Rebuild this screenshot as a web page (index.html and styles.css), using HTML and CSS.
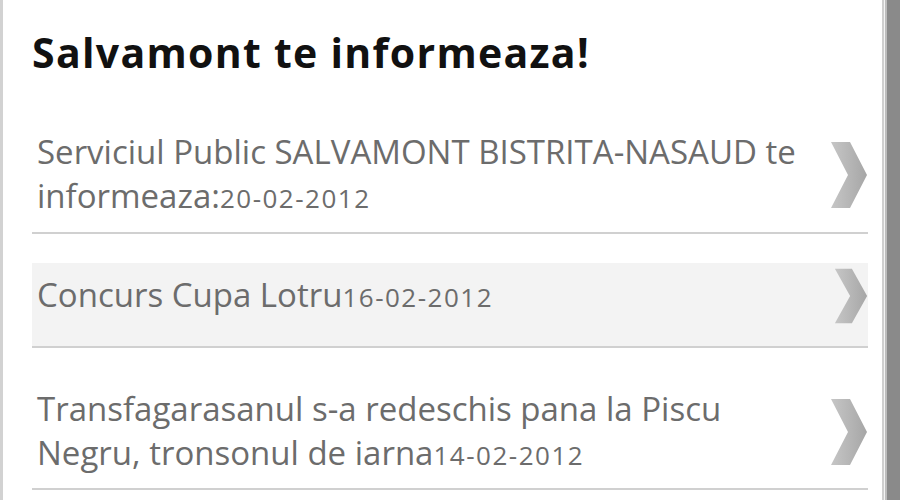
FILE: index.html
```html
<!DOCTYPE html>
<html>
<head>
<meta charset="utf-8">
<link rel="stylesheet" href="styles.css">
</head>
<body>
<div class="screen">
  <div class="edge-left"></div>
  <main class="content">
    <h1 class="title">Salvamont te informeaza!</h1>
    <ul class="list">
      <li class="item">
        <p class="text">Serviciul Public SALVAMONT BISTRITA-NASAUD te informeaza:<span class="date">20-02-2012</span></p>
        <svg class="chev" viewBox="0 0 38 68" preserveAspectRatio="none" aria-hidden="true"><defs><linearGradient id="g1" x1="0" y1="0" x2="1" y2="0"><stop offset="0" stop-color="#c6c6c6"/><stop offset="1" stop-color="#a6a6a6"/></linearGradient></defs><polygon points="1,1 20,1 37,34 20,67 1,67 18,34" fill="url(#g1)"/></svg>
      </li>
      <li class="item item-active">
        <p class="text">Concurs Cupa Lotru<span class="date">16-02-2012</span></p>
        <svg class="chev chev-sm" viewBox="0 0 38 68" preserveAspectRatio="none" aria-hidden="true"><polygon points="1,1 20,1 37,34 20,67 1,67 18,34" fill="url(#g1)"/></svg>
      </li>
      <li class="item">
        <p class="text">Transfagarasanul s-a redeschis pana la Piscu Negru, tronsonul de iarna<span class="date">14-02-2012</span></p>
        <svg class="chev" viewBox="0 0 38 68" preserveAspectRatio="none" aria-hidden="true"><polygon points="1,1 20,1 37,34 20,67 1,67 18,34" fill="url(#g1)"/></svg>
      </li>
    </ul>
  </main>
  <div class="edge-right"></div>
  <div class="scrollbar"></div>
</div>
</body>
</html>
```

FILE: styles.css
```css
html, body {
  margin: 0;
  padding: 0;
  background: #ffffff;
}
.screen {
  display: flex;
  width: 900px;
  height: 500px;
  overflow: hidden;
  font-family: "Open Sans", "DejaVu Sans", sans-serif;
}
.edge-left {
  width: 3px;
  background: #d2d2d2;
  flex: none;
}
.content {
  flex: 1;
  padding: 0 14px 0 29px;
  min-width: 0;
}
.title {
  margin: 0;
  padding-top: 26px;
  font-size: 41px;
  line-height: 52px;
  font-weight: 700;
  color: #111111;
  letter-spacing: 1.3px;
}
.list {
  list-style: none;
  margin: 0;
  padding: 0;
  padding-top: 13px;
}
.item {
  display: flex;
  align-items: center;
  padding: 39px 0 12px 5px;
  border-bottom: 2px solid #d0d0d0;
}
.item:last-child {
  padding-bottom: 11px;
}
.item-active {
  padding-bottom: 27px;
  background: linear-gradient(#ffffff 29px, #f3f3f3 29px);
}
.text {
  flex: 1;
  margin: 0;
  font-size: 33px;
  line-height: 44px;
  color: #6c6c6c;
}
.date {
  font-size: 26px;
  letter-spacing: 1.5px;
}
.chev {
  flex: none;
  width: 38px;
  height: 68px;
  margin: -12px 0 -12px 12px;
  filter: blur(0.7px);
}
.chev-sm {
  width: 34px;
  height: 56px;
  margin-left: 16px;
}
.edge-right {
  width: 5px;
  flex: none;
  border-left: 2px solid #cfcfcf;
  border-right: 2px solid #bdbdbd;
  box-sizing: border-box;
  background: #f4f4f4;
}
.scrollbar {
  width: 13px;
  flex: none;
  background: #8a8a8a;
}
```
